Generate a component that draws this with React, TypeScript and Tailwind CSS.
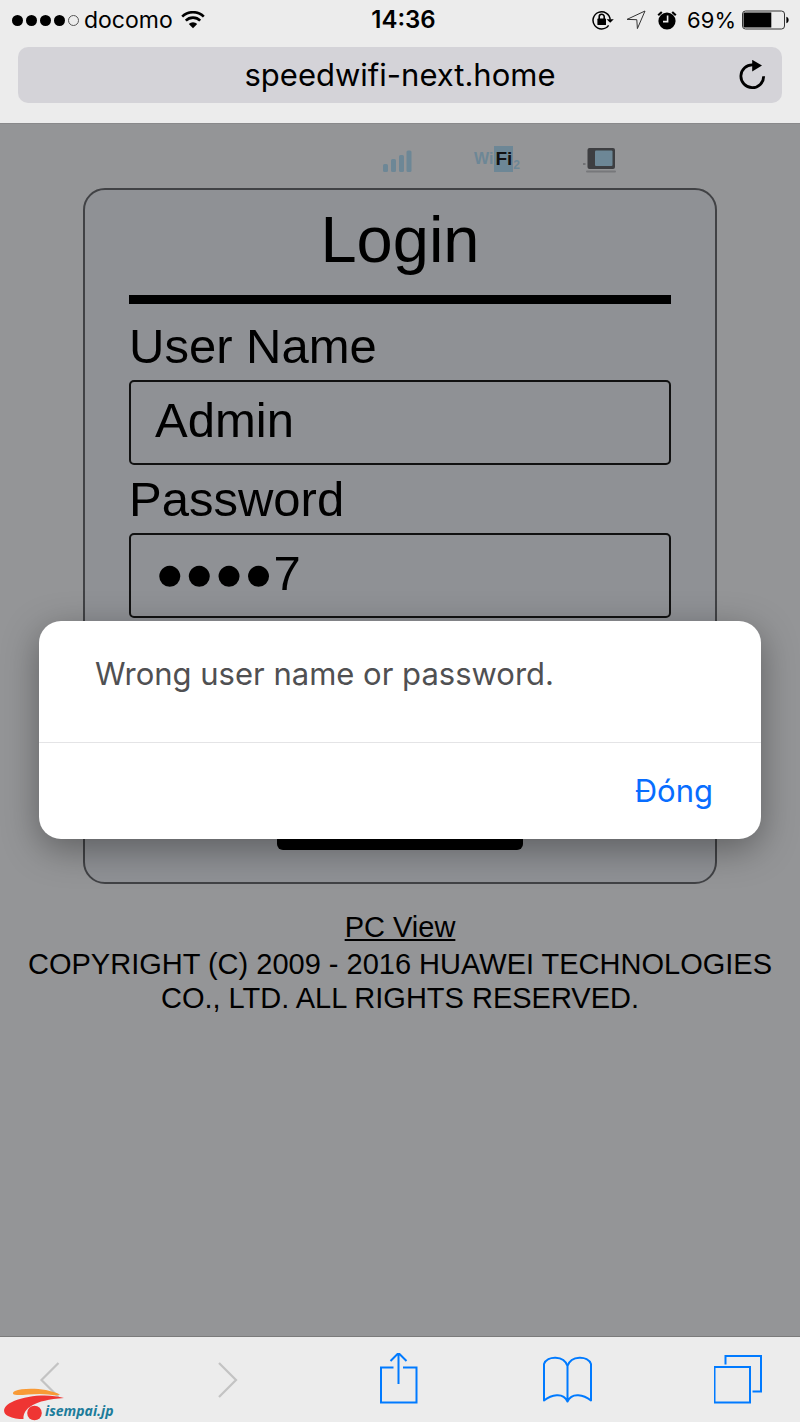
import { useState } from "react";

function StatusBar() {
  return (
    <div className="flex h-10 items-center pl-3 pr-[11px] font-['Inter',sans-serif] text-[23px]">
      <div className="flex flex-1 items-center">
        <div className="mr-[5px] flex gap-[3px]">
          <span className="size-[11px] rounded-full bg-black" />
          <span className="size-[11px] rounded-full bg-black" />
          <span className="size-[11px] rounded-full bg-black" />
          <span className="size-[11px] rounded-full bg-black" />
          <span className="size-[11px] rounded-full border border-[#555]" />
        </div>
        <span>docomo</span>
        <svg className="ml-2 h-[18px] w-6" viewBox="0 0 24 18" fill="none">
          <path d="M1.2 5.6a15.4 15.4 0 0 1 21.6 0" stroke="#000" strokeWidth="2.6" />
          <path d="M4.8 9.6a10.2 10.2 0 0 1 14.4 0" stroke="#000" strokeWidth="2.6" />
          <path d="M12 17.2 7.8 13a6 6 0 0 1 8.4 0z" fill="#000" />
        </svg>
      </div>
      <span className="ml-[6px] text-[24px] font-semibold">14:36</span>
      <div className="flex flex-1 items-center justify-end">
        <svg className="h-5 w-[22px]" viewBox="0 0 22 20" fill="none">
          <path d="M16.6 15.4A8.6 8.6 0 1 1 18.2 9.6" stroke="#000" strokeWidth="1.5" />
          <path d="M14.6 9.2h7.2l-3.6 3.6z" fill="#000" />
          <rect x="5.4" y="8.6" width="8.6" height="6.4" rx="0.6" fill="#000" />
          <path d="M7.2 9V6.8a2.5 2.5 0 0 1 5 0V9" stroke="#000" strokeWidth="1.6" />
        </svg>
        <svg className="ml-3 size-5" viewBox="0 0 20 20" fill="none">
          <path d="M1 9.4 19 1l-7.6 17.6-.6-8.9z" stroke="#333" strokeWidth="1" />
        </svg>
        <svg className="ml-[11px] size-5" viewBox="0 0 20 20" fill="none">
          <circle cx="10" cy="11" r="8.6" fill="#000" />
          <path d="M1.2 5.2 4.8 2M18.8 5.2 15.2 2" stroke="#000" strokeWidth="2.2" />
          <path d="M10.6 5.6v6H6" stroke="#ececec" strokeWidth="1.6" />
        </svg>
        <span className="ml-[10px] text-[22px]">69%</span>
        <svg className="ml-[6px] h-5 w-[47px]" viewBox="0 0 47 20" fill="none">
          <rect x="0.5" y="1" width="42" height="18" rx="3" stroke="#333" />
          <path d="M2.5 2.4h26.8v15.2H2.5a1 1 0 0 1-1-1V3.4a1 1 0 0 1 1-1z" fill="#000" />
          <path d="M44.4 6.8c3 .8 3 5.6 0 6.4z" fill="#000" />
        </svg>
      </div>
    </div>
  );
}

function AddressBar() {
  return (
    <div className="px-[18px] pb-5 pt-[7px]">
      <div className="flex h-14 items-center rounded-[10px] bg-[#d4d3d8] pl-12 pr-3">
        <span className="flex-1 text-center font-['Inter',sans-serif] text-[31px]">
          speedwifi-next.home
        </span>
        <button type="button" aria-label="Reload" className="flex w-9 justify-center">
          <svg className="h-[30px] w-[27px]" viewBox="0 0 27 30" fill="none">
            <path d="M14 4.900A11.400 11.400 0 1 0 24.700 16.300" stroke="#000" strokeWidth="2.8" />
            <path d="M13.2-.2v11.600L23 5.600z" fill="#000" />
          </svg>
        </button>
      </div>
    </div>
  );
}

function DeviceIcons() {
  return (
    <div className="flex items-end justify-end gap-[62px] pr-[184px]">
      <svg className="h-7 w-[29px]" viewBox="0 0 29 28" fill="#6d8796">
        <rect x="0" y="18" width="5" height="8" rx="1.5" />
        <rect x="8" y="13" width="5" height="13" rx="1.5" />
        <rect x="16" y="9" width="5" height="17" rx="1.5" />
        <rect x="23.5" y="4.5" width="5" height="21.5" rx="1.5" />
      </svg>
      <div className="flex h-7 w-[47px] items-start font-bold leading-[26px] text-[#6d8796]">
        <span className="text-[16px]">Wi</span>
        <span className="ml-px bg-[#6d8796] px-px text-[19px] text-[#111]">Fi</span>
        <span className="pt-[11px] text-[12px] leading-4">2</span>
      </div>
      <svg className="h-7 w-[33px]" viewBox="0 0 33 28">
        <rect x="4.5" y="2" width="27.5" height="21" rx="2" fill="#3d3e41" />
        <rect x="12" y="4.5" width="17.5" height="15.5" rx="1" fill="#6d8796" />
        <rect x="3" y="24.5" width="30" height="2" rx="1" fill="#77787b" />
        <rect x="0" y="17" width="2.5" height="2" fill="#717275" />
      </svg>
    </div>
  );
}

const fieldClass =
  "block h-[85px] w-full rounded-[5px] border-2 border-[#111] bg-transparent px-6 pb-[6px] text-[49px] text-black outline-none";
const labelClass = "block py-[3px] text-[49px] leading-[62px]";

function LoginForm() {
  const [userName, setUserName] = useState("Admin");
  const [password, setPassword] = useState("●●●●7");

  return (
    <form
      className="mx-[83px] mt-[14px] rounded-[22px] border-2 border-[#414245] bg-[#8f9195] px-11 pb-8"
      onSubmit={(e) => e.preventDefault()}
    >
      <h1 className="pb-[13px] pt-2 text-center text-[65px] leading-[84px]">Login</h1>
      <hr className="mb-2 border-t-[9px] border-black" />
      <label htmlFor="username" className={labelClass}>
        User Name
      </label>
      <input
        id="username"
        className={fieldClass}
        value={userName}
        onChange={(e) => setUserName(e.target.value)}
      />
      <label htmlFor="password" className={labelClass}>
        Password
      </label>
      <input
        id="password"
        className={fieldClass}
        value={password}
        onChange={(e) => setPassword(e.target.value)}
      />
      <button
        type="submit"
        aria-label="Login"
        className="mx-auto mt-[148px] block h-[84px] w-[246px] rounded-[6px] bg-black"
      />
    </form>
  );
}

function AlertDialog() {
  return (
    <div className="absolute inset-0 flex items-center px-[39px]">
      <div
        role="alertdialog"
        aria-describedby="alert-message"
        className="w-full rounded-[22px] bg-white font-['Inter',sans-serif] shadow-[0_10px_36px_rgba(0,0,0,0.36)]"
      >
        <p
          id="alert-message"
          className="border-b border-[#e4e4e6] px-14 pb-12 pt-[33px] text-[31px] leading-10 text-[#505052]"
        >
          Wrong user name or password.
        </p>
        <div className="flex h-24 items-center justify-end pr-12">
          <button type="button" className="text-[31px] text-[#086dff]">
            Đóng
          </button>
        </div>
      </div>
    </div>
  );
}

function Toolbar() {
  return (
    <nav className="flex h-[86px] items-center justify-between border-t border-[#7b7b7b] bg-[#ececec] pl-8 pr-[38px]">
      <button type="button" aria-label="Back" disabled>
        <svg className="h-[54px] w-12" viewBox="0 0 48 54" fill="none">
          <path d="M26.5 10 9.5 27 26.5 44" stroke="#c3c3c3" strokeWidth="2.2" />
        </svg>
      </button>
      <button type="button" aria-label="Forward" disabled>
        <svg className="h-[54px] w-12" viewBox="0 0 48 54" fill="none">
          <path d="m17 10 17 17-17 17" stroke="#c3c3c3" strokeWidth="2.2" />
        </svg>
      </button>
      <button type="button" aria-label="Share">
        <svg className="h-[54px] w-12" viewBox="0 0 48 54" fill="none" stroke="#007aff" strokeWidth="2">
          <path d="M21.5 14.5H9V49.500h35.500V14.5H31" />
          <path d="M26.500 31V0M18.500 8l8-8 8 8" />
        </svg>
      </button>
      <button type="button" aria-label="Bookmarks">
        <svg className="h-[54px] w-[50px]" viewBox="0 0 50 54" fill="none" stroke="#007aff" strokeWidth="2" strokeLinejoin="round">
          <path d="M25.5 48.500V13C22 2 5 2.500 2 11v36.500c7-5.500 19-9 23.500 1 4.500-10 16.500-6.500 23.500-1V11C46 2.500 29 2 25.500 13" />
        </svg>
      </button>
      <button type="button" aria-label="Tabs">
        <svg className="h-[54px] w-12" viewBox="0 0 48 54" fill="none" stroke="#007aff" strokeWidth="2">
          <path d="M0 14h35.500v35.500H0z M11 11.500V3h35.500v35.500h-8.500" transform="translate(.5)" />
        </svg>
      </button>
    </nav>
  );
}

function Watermark() {
  return (
    <div className="absolute bottom-0 left-1 flex items-end">
      <svg className="h-[34px] w-[62px]" viewBox="0 0 62 34">
        <path d="M11 3C19-.5 42-.5 56 6.500c-3 1.500-7 .5-12 0C33 5 24 7 13 7c-5 0-5-2.500-2-4z" fill="#f89a36" />
        <path d="M60 10C46 5.500 24 7 10 13-2 18-2 25 4 28c5 2.500 10 3 15.500 3C19 21 29 12 60 10z" fill="#ef3533" />
        <circle cx="30.5" cy="25" r="7.300" fill="#ef3533" />
      </svg>
      <span className="-ml-[21px] pb-[3px] font-['Open_Sans',sans-serif] text-[14px] font-bold italic leading-4 text-[#1c7c9b]">
        isempai.jp
      </span>
    </div>
  );
}

export default function App() {
  return (
    <div className="relative flex min-h-screen flex-col bg-[#949597] font-['Liberation_Sans',Arial,sans-serif] text-black">
      <header className="border-b border-[#89898b] bg-[#ececec]">
        <StatusBar />
        <AddressBar />
      </header>
      <main className="relative flex-1 pt-[22px]">
        <DeviceIcons />
        <LoginForm />
        <footer className="px-6 pt-[26px] text-center text-[29px] leading-[34px]">
          <a href="#pc" className="mb-[3px] inline-block underline">
            PC View
          </a>
          <p>COPYRIGHT (C) 2009 - 2016 HUAWEI TECHNOLOGIES CO., LTD. ALL RIGHTS RESERVED.</p>
        </footer>
        <AlertDialog />
      </main>
      <Toolbar />
      <Watermark />
    </div>
  );
}
